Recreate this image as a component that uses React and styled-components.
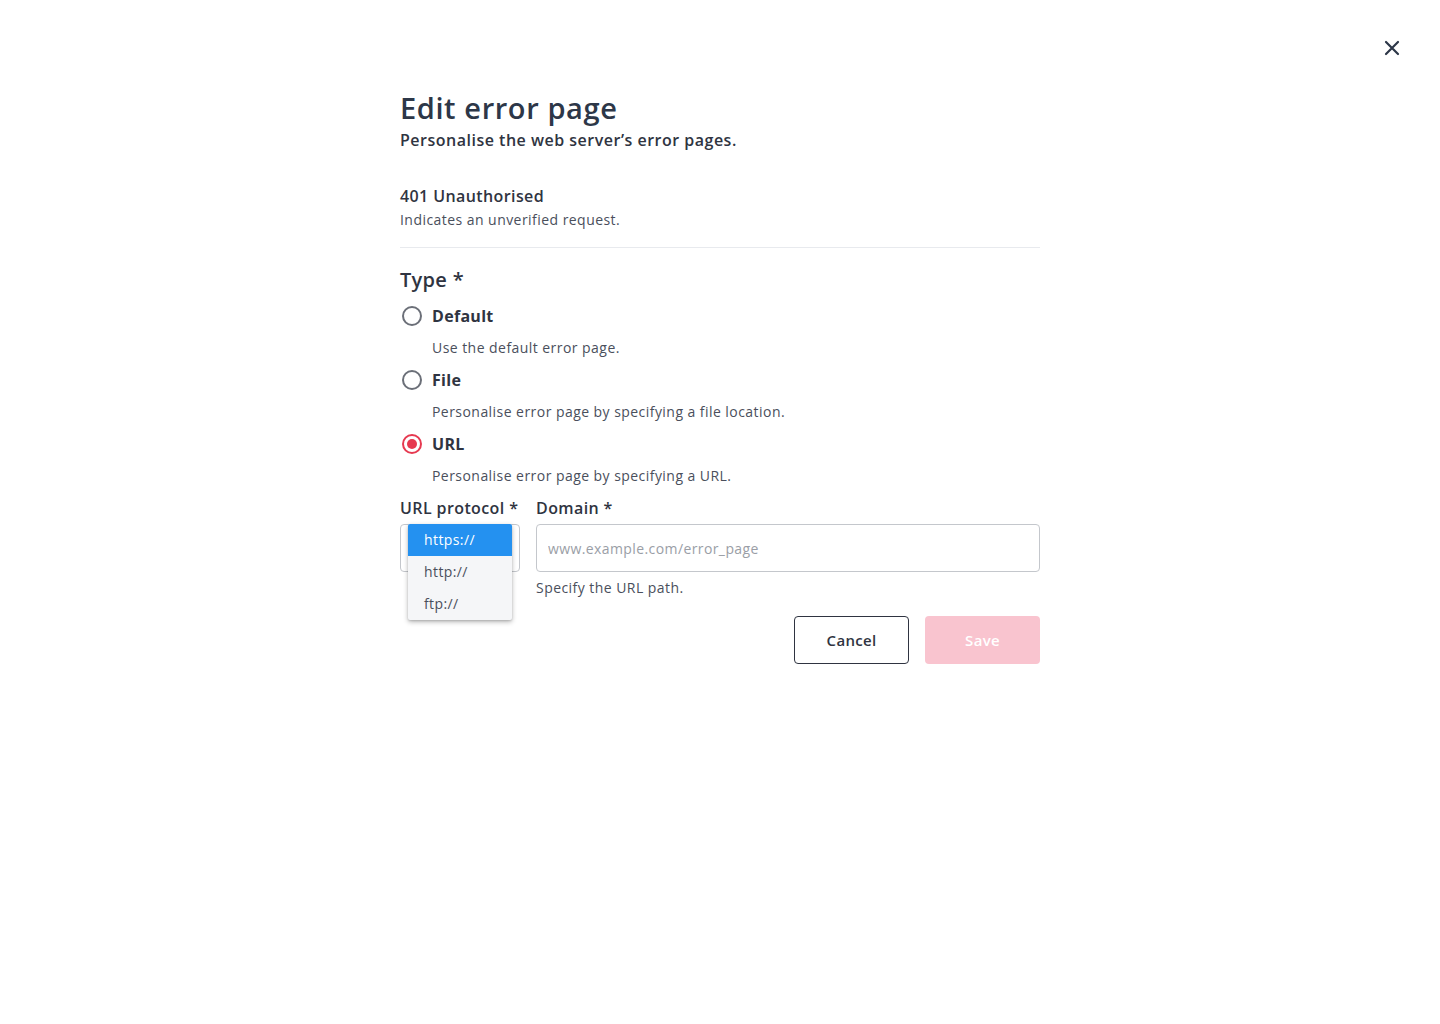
import React from "react";
import styled, { createGlobalStyle } from "styled-components";

const Global = createGlobalStyle`
  html, body { margin: 0; padding: 0; background: #fff; }
  body { font-family: "Open Sans", "DejaVu Sans", sans-serif; color: #2f3441; }
  * { box-sizing: border-box; }
`;

const Page = styled.div`
  position: relative;
  width: 1440px;
  height: 1024px;
  background: #fff;
  display: flex;
  justify-content: center;
`;

const CloseButton = styled.button`
  position: absolute;
  top: 38px;
  right: 38px;
  width: 20px;
  height: 20px;
  padding: 0;
  border: none;
  background: none;
  display: flex;
  align-items: center;
  justify-content: center;
  cursor: pointer;
`;

const Content = styled.div`
  width: 640px;
  padding-top: 89px;
  display: flex;
  flex-direction: column;
`;

const Title = styled.h1`
  margin: 0;
  font-size: 29px;
  line-height: 38px;
  font-weight: 600;
  color: #2d3748;
  letter-spacing: 0.6px;
`;

const Subtitle = styled.p`
  margin: 1px 0 0;
  font-size: 16px;
  line-height: 24px;
  font-weight: 600;
  color: #2f3441;
  letter-spacing: 0.5px;
`;

const Section = styled.div`
  margin-top: 32px;
  padding-bottom: 15px;
  border-bottom: 1px solid #e8eaee;
`;

const SectionTitle = styled.div`
  font-size: 16px;
  line-height: 24px;
  font-weight: 600;
  color: #2f3441;
  letter-spacing: 0.4px;
`;

const Muted = styled.div`
  font-size: 14px;
  line-height: 24px;
  color: #4a4f5c;
  letter-spacing: 0.45px;
  padding-left: ${(p) => p.$indent || 0}px;
`;

const TypeLabel = styled.div`
  margin-top: 18px;
  font-size: 20px;
  line-height: 28px;
  font-weight: 600;
  color: #2f3441;
  letter-spacing: 0.3px;
`;

const RadioRow = styled.label`
  display: flex;
  align-items: center;
  gap: 10px;
  height: 32px;
  margin-top: ${(p) => p.$mt || 0}px;
  cursor: pointer;
`;

const RadioCircle = styled.span`
  width: 20px;
  height: 20px;
  margin-left: 2px;
  border-radius: 50%;
  border: 2px solid ${(p) => (p.$checked ? "#e63950" : "#6b6f78")};
  display: flex;
  align-items: center;
  justify-content: center;
  &::after {
    content: "";
    display: ${(p) => (p.$checked ? "block" : "none")};
    width: 10px;
    height: 10px;
    border-radius: 50%;
    background: #e63950;
  }
`;

const RadioText = styled.span`
  font-size: 16px;
  font-weight: 700;
  color: #2f3441;
  letter-spacing: 0.3px;
`;

const RadioDesc = styled(Muted)`
  height: 32px;
  line-height: 32px;
`;

const FieldRow = styled.div`
  display: flex;
  gap: 16px;
`;

const Field = styled.div`
  display: flex;
  flex-direction: column;
  width: ${(p) => p.$w || "auto"};
  flex: ${(p) => (p.$grow ? 1 : "none")};
  position: relative;
`;

const FieldLabel = styled.div`
  height: 32px;
  line-height: 32px;
  font-size: 16px;
  font-weight: 600;
  color: #2f3441;
  white-space: nowrap;
  letter-spacing: 0.4px;
`;

const SelectBox = styled.div`
  height: 48px;
  border: 1px solid #c4c7cc;
  border-radius: 4px;
  background: #fff;
`;

const Menu = styled.ul`
  position: absolute;
  top: 32px;
  left: 8px;
  width: 104px;
  margin: 0;
  padding: 0;
  list-style: none;
  background: #f5f6f8;
  border-radius: 2px;
  box-shadow: 0 2px 5px rgba(0, 0, 0, 0.28), 0 1px 2px rgba(0, 0, 0, 0.12);
  overflow: hidden;
`;

const MenuItem = styled.li`
  height: 32px;
  line-height: 32px;
  padding-left: 16px;
  font-size: 14px;
  letter-spacing: 0.4px;
  color: ${(p) => (p.$active ? "#fff" : "#4a4f5c")};
  background: ${(p) => (p.$active ? "#2491f0" : "transparent")};
`;

const Input = styled.input`
  height: 48px;
  width: 100%;
  border: 1px solid #c4c7cc;
  border-radius: 4px;
  padding: 0 11px;
  font-family: inherit;
  font-size: 14px;
  letter-spacing: 0.4px;
  color: #2f3441;
  outline: none;
  &::placeholder {
    color: #9a9ea6;
  }
`;

const Helper = styled(Muted)`
  margin-top: 4px;
`;

const Actions = styled.div`
  display: flex;
  justify-content: flex-end;
  gap: 16px;
  margin-top: 16px;
`;

const Button = styled.button`
  width: 115px;
  height: 48px;
  border-radius: 4px;
  font-family: inherit;
  font-size: 15px;
  font-weight: 600;
  letter-spacing: 0.3px;
  cursor: pointer;
  border: ${(p) => (p.$primary ? "none" : "1px solid #2f3441")};
  background: ${(p) => (p.$primary ? "#f9c4cf" : "#fff")};
  color: ${(p) => (p.$primary ? "#fff" : "#2f3441")};
`;

const options = [
  { key: "default", label: "Default", desc: "Use the default error page." },
  { key: "file", label: "File", desc: "Personalise error page by specifying a file location." },
  { key: "url", label: "URL", desc: "Personalise error page by specifying a URL." },
];

export default function App() {
  const selected = "url";
  return (
    <>
      <Global />
      <Page>
        <CloseButton aria-label="Close">
          <svg width="16" height="16" viewBox="0 0 16 16">
            <path d="M2 2 L14 14 M14 2 L2 14" stroke="#2d3748" strokeWidth="2.2" strokeLinecap="round" />
          </svg>
        </CloseButton>
        <Content>
          <Title>Edit error page</Title>
          <Subtitle>Personalise the web server’s error pages.</Subtitle>
          <Section>
            <SectionTitle>401 Unauthorised</SectionTitle>
            <Muted>Indicates an unverified request.</Muted>
          </Section>
          <TypeLabel>Type *</TypeLabel>
          {options.map((o, i) => (
            <React.Fragment key={o.key}>
              <RadioRow $mt={i === 0 ? 6 : 0}>
                <RadioCircle $checked={selected === o.key} />
                <RadioText>{o.label}</RadioText>
              </RadioRow>
              <RadioDesc $indent={32}>{o.desc}</RadioDesc>
            </React.Fragment>
          ))}
          <FieldRow>
            <Field $w="120px">
              <FieldLabel>URL protocol *</FieldLabel>
              <SelectBox />
              <Menu>
                <MenuItem $active>https://</MenuItem>
                <MenuItem>http://</MenuItem>
                <MenuItem>ftp://</MenuItem>
              </Menu>
            </Field>
            <Field $grow>
              <FieldLabel>Domain *</FieldLabel>
              <Input placeholder="www.example.com/error_page" />
              <Helper>Specify the URL path.</Helper>
            </Field>
          </FieldRow>
          <Actions>
            <Button>Cancel</Button>
            <Button $primary>Save</Button>
          </Actions>
        </Content>
      </Page>
    </>
  );
}
